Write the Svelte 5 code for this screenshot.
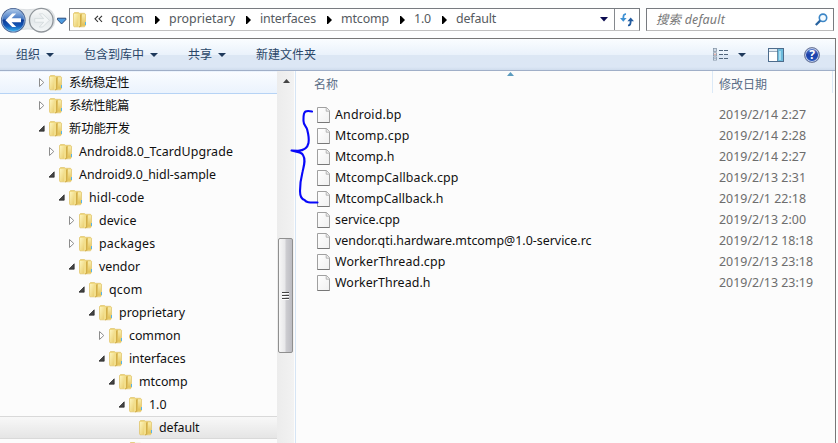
<script>
  const crumbs = [
    ['qcom', 33], ['proprietary', 66], ['interfaces', 56],
    ['mtcomp', 48], ['1.0', 17], ['default', 40]
  ];

  const tree = [
    { name: '系统稳定性', w: 60, level: 0, state: 'closed', mark: 'hover' },
    { name: '系统性能篇', w: 60, level: 0, state: 'closed' },
    { name: '新功能开发', w: 61, level: 0, state: 'open' },
    { name: 'Android8.0_TcardUpgrade', w: 154, level: 1, state: 'closed' },
    { name: 'Android9.0_hidl-sample', w: 137, level: 1, state: 'open' },
    { name: 'hidl-code', w: 55.5, level: 2, state: 'open' },
    { name: 'device', w: 37.5, level: 3, state: 'closed' },
    { name: 'packages', w: 56.5, level: 3, state: 'closed' },
    { name: 'vendor', w: 41, level: 3, state: 'open' },
    { name: 'qcom', w: 33.5, level: 4, state: 'open' },
    { name: 'proprietary', w: 66, level: 5, state: 'open' },
    { name: 'common', w: 51.5, level: 6, state: 'closed' },
    { name: 'interfaces', w: 56.5, level: 6, state: 'open' },
    { name: 'mtcomp', w: 48.5, level: 7, state: 'open' },
    { name: '1.0', w: 17.5, level: 8, state: 'open' },
    { name: 'default', w: 40.5, level: 9, state: 'none', mark: 'selected' },
    { name: '', w: 0, level: 8, state: 'none', mark: 'cut' }
  ];

  const files = [
    ['Android.bp', 66.5, '2019/2/14 2:27', 87],
    ['Mtcomp.cpp', 74.5, '2019/2/14 2:28', 87],
    ['Mtcomp.h', 59.5, '2019/2/14 2:27', 87],
    ['MtcompCallback.cpp', 123.5, '2019/2/13 2:31', 87],
    ['MtcompCallback.h', 108.5, '2019/2/1 22:18', 87],
    ['service.cpp', 65, '2019/2/13 2:00', 87],
    ['vendor.qti.hardware.mtcomp@1.0-service.rc', 256.5, '2019/2/12 18:18', 94],
    ['WorkerThread.cpp', 110.5, '2019/2/13 23:18', 94],
    ['WorkerThread.h', 95.5, '2019/2/13 23:19', 94]
  ];

  // Tracks a label so that it fills the given width.
  function fit(node, width) {
    if (!width) return;
    const natural = node.getBoundingClientRect().width;
    node.style.letterSpacing = `${(width - natural) / node.textContent.length}px`;
  }
</script>

{#snippet folder()}
  <svg class="folder" width="14" height="16" viewBox="0 0 14 16">
    <path d="M.5 1.5 1.5.5h4l1 .8h5l1 1v11l-1 1.5H1l-.5-1z" fill="#f0d980" stroke="#dfc36a" stroke-width=".7" />
    <path d="M1 2h5v12l-4 .5-1-.5z" fill="url(#folderFront)" />
    <path d="M6 3.2 8.6 1.8v12.4L6 15.5z" fill="#d2ae48" />
    <path d="M5 3 7 1.8v12L5 15.3z" fill="#f3df8c" />
    <path d="M9 2.5h3v11.2H9z" fill="url(#folderBack)" />
    <path d="M12 10h1v3h-1z" fill="#56b4ea" />
  </svg>
{/snippet}

<svg class="defs" width="0" height="0">
  <defs>
    <linearGradient id="folderFront" x2="1" y2="1"><stop stop-color="#fdf5bd" /><stop offset="1" stop-color="#e8ca66" /></linearGradient>
    <linearGradient id="folderBack" x2="0" y2="1"><stop stop-color="#f9ecaa" /><stop offset="1" stop-color="#e2c055" /></linearGradient>
    <linearGradient id="pageFill" x2="1" y2="1"><stop stop-color="#fff" /><stop offset="1" stop-color="#f0f0f0" /></linearGradient>
    <linearGradient id="ball" x2="0" y2="1"><stop stop-color="#a9c6e8" /><stop offset=".42" stop-color="#4a7cc6" /><stop offset=".5" stop-color="#0c3b96" /><stop offset=".75" stop-color="#1458b8" /><stop offset="1" stop-color="#35b4f0" /></linearGradient>
    <linearGradient id="ballOff" x2="0" y2="1"><stop stop-color="#fafbfb" /><stop offset=".5" stop-color="#e3e8ea" /><stop offset="1" stop-color="#f4f7f8" /></linearGradient>
  </defs>
</svg>

<div class="window">
  <header class="nav">
    <svg class="travel" width="69" height="36" viewBox="0 0 69 36">
      <path d="M10 8.5Q27 11 44 8.5Q54 8 55 20Q54 32 42 31Q28 27 14 31Z" fill="#e3e7e9" stroke="#c9ced1" stroke-width=".6" />
      <circle cx="13.3" cy="20.3" r="12.3" fill="#3f5a8c" />
      <circle cx="13.3" cy="20.3" r="11.2" fill="url(#ball)" stroke="#9dbbe0" stroke-width=".7" />
      <path d="M5.5 20.3 12.2 13.6h4l-4.6 4.7H21v4h-9.4l4.6 4.7h-4z" fill="#fff" />
      <circle cx="41.3" cy="20.2" r="11.8" fill="url(#ballOff)" stroke="#8f959a" stroke-width="1.3" />
      <path d="M49.3 20.3 42.6 13.8h-3.3l4.4 4.8h-9v3.6h9l-4.4 4.8h3.3z" fill="#f3f6f7" stroke="#cfd5d8" stroke-width=".7" />
      <path d="M57.5 18.2h8.3v1.5l-4.2 4.3-4.1-4.3z" fill="#4d9be0" stroke="#1c3e70" stroke-width=".9" />
    </svg>
    <div class="address">
      {@render folder()}
      <svg class="more" width="9" height="8" viewBox="0 0 9 8"><path d="M4 .8 1 3.8 4 6.8M8 .8 5 3.8 8 6.8" fill="none" stroke="#333" stroke-width="1.1" /></svg>
      <div class="crumbs">
        {#each crumbs as [name, w], i}
          {#if i}<svg class="step" width="5" height="8" viewBox="0 0 5 8"><path d="M0 0h1l4 4-4 4H0z" fill="#000" /></svg>{/if}
          <span use:fit={w}>{name}</span>
        {/each}
      </div>
      <svg class="drop" width="8" height="5" viewBox="0 0 8 5"><path d="M0 0h8L4 4.5z" fill="#0b0b50" /></svg>
      <div class="refresh">
        <svg width="14" height="14" viewBox="0 0 14 14">
          <path d="M6 1.2C3.7 1 3.3 2.5 3.3 6" fill="none" stroke="#3e91d4" stroke-width="1.8" /><path d="M0 5h6.6L3.3 8.7z" fill="#3e91d4" />
          <path d="M8 12.3c2.2.2 2.7-1.3 2.7-5" fill="none" stroke="#235ca0" stroke-width="1.8" /><path d="M7.4 8.2H14l-3.3-3.7z" fill="#235ca0" />
        </svg>
      </div>
    </div>
    <div class="search">
      <span use:fit={69}>搜索 default</span>
      <svg width="13" height="13" viewBox="0 0 13 13"><circle cx="8" cy="4.8" r="3.7" fill="#f5fbff" stroke="#3c86c6" stroke-width="1.6" /><path d="M5.2 7.6.8 12" stroke="#27639f" stroke-width="2.2" /></svg>
    </div>
  </header>

  <div class="body">
    <div class="toolbar">
      <div class="tool t1">组织<i></i></div>
      <div class="tool t2">包含到库中<i></i></div>
      <div class="tool t3">共享<i></i></div>
      <div class="tool t4">新建文件夹</div>
      <div class="right">
        <svg width="15" height="13" viewBox="0 0 15 13">
          <g fill="#fff" stroke="#8494a6" stroke-width=".8"><rect x=".5" y=".5" width="3" height="3" /><rect x=".5" y="4.8" width="3" height="3" /><rect x=".5" y="9.1" width="3" height="3" /></g>
          <path d="M1.5 2h1M1.5 10.6h1" stroke="#3f70a8" /><path d="M1.5 6.3h1" stroke="#c04030" />
          <path d="M6 2.5h4m1 0h4M6 6.5h4m1 0h4M6 10.5h4m1 0h4" stroke="#52667c" />
        </svg>
        <i></i>
        <svg class="preview" width="16" height="14" viewBox="0 0 16 14"><rect x=".5" y=".5" width="15" height="13" fill="#fff" stroke="#4d6c8c" /><path d="M1 1h14v2H1z" fill="#e4edf5" /><path d="M1 3.5h9" stroke="#7c95ad" stroke-width=".8" /><rect x="10" y="1" width="5" height="12" fill="#6dbbdc" /><path d="M9.5 1v12" stroke="#44718f" stroke-width=".8" /><path d="M11 3h2v9h-2z" fill="#a8dcef" /></svg>
        <div class="help">?</div>
      </div>
    </div>

    <main>
      <nav>
        {#each tree as row}
          <div class="node {row.mark ?? ''}" style="padding-left: {39 + row.level * 10}px">
            <svg class="twist" width="7" height="9" viewBox="0 0 7 9">
              {#if row.state === 'closed'}<path d="M.5.5 4.8 4.5.5 8.5z" fill="#fff" stroke="#8c8c8c" />{/if}
              {#if row.state === 'open'}<path d="M5.2 1.8v5.4H-.2z" fill="#444" stroke="#222" stroke-width=".7" />{/if}
            </svg>
            {@render folder()}
            <span use:fit={row.w}>{row.name}</span>
          </div>
        {/each}
      </nav>
      <div class="scroll">
        <svg class="up" width="7" height="4" viewBox="0 0 7 4"><path d="M3.5 0 7 4H0z" fill="#444" /></svg>
        <div class="thumb"><b></b><b></b><b></b></div>
      </div>
      <section>
        <div class="head">
          <span class="hname">名称</span>
          <svg class="sort" width="7" height="4" viewBox="0 0 7 4"><path d="M3.5 0 7 4H0z" fill="#5c9cbf" /></svg>
          <span class="hdate">修改日期</span>
        </div>
        {#each files as [name, w, date, dw]}
          <div class="file">
            <svg width="14" height="16" viewBox="0 0 14 16"><path d="M.5.5h9l3 3.3v11.7H.5z" fill="url(#pageFill)" stroke="#a0a0a0" /><path d="M.5 15.5h12" stroke="#777" /><path d="M9.2.8v3.4h3.3" fill="#eee" stroke="#b0b0b0" stroke-width=".9" /></svg>
            <div class="fname"><span use:fit={w}>{name}</span></div>
            <div class="date"><span use:fit={dw}>{date}</span></div>
          </div>
        {/each}
        <svg class="brace" width="34" height="100" viewBox="290 106 34 100">
          <path d="M312 111.5Q307.5 110.5 305.5 111.5C303 113 303.5 118 303.5 121C303.5 125 306 126 307 129C308 133 309.5 138 308.5 143C307.5 148 304 150.5 298 150.8L291.5 150.5C299 152 302 152.5 303 155C306 160 304 165 302.5 172C300.5 180 300 184 300 191C300 196 301 199 304.5 200C307 203 310 202.5 317.5 202.5" />
        </svg>
      </section>
    </main>
  </div>
</div>

<style>
  :global(body) { margin: 0; background: #fdfefe; overflow: hidden; }
  .window { width: 838px; height: 443px; overflow: hidden; font: 12.4px/16px "Noto Sans", "Noto Sans CJK SC", sans-serif; color: #101010; white-space: nowrap; }
  .defs { position: absolute; }
  svg { flex: none; display: block; }
  .nav { display: flex; height: 38px; }
  .address { box-sizing: border-box; display: flex; align-items: center; width: 571px; height: 23px; margin-top: 8px; border: 1px solid #777b80; border-bottom-color: #c0c0c0; background: #fff; padding-left: 3px; color: #555a60; }
  .more { margin: 0 0 2px 7px; }
  .crumbs { display: flex; align-items: center; margin-left: 8px; flex: 1; padding-bottom: 1px; }
  .step { margin: 1px 9px 0 11px; }
  .drop { margin-right: 6px; }
  .refresh { display: flex; align-items: center; justify-content: center; width: 24px; height: 21px; border-left: 1px solid #85898e; }
  .search { box-sizing: border-box; display: flex; align-items: center; justify-content: space-between; width: 188px; height: 23px; margin: 8px 0 0 6px; padding: 0 5px 0 9px; border: 1px solid #777b80; border-bottom-color: #bbb; background: #fff; color: #777; font-style: italic; }
  .body { box-sizing: border-box; width: 836px; height: 405px; border-top: 1px solid #777; border-right: 1px solid #777; overflow: hidden; }
  .toolbar { box-sizing: border-box; display: flex; align-items: center; height: 32px; border-bottom: 1px solid #a0afc8; background: linear-gradient(#fafdff 0, #eaf2fb 50%, #dce7f4 51%, #dce7f5 90%, #cfdced); color: #2a4668; font-size: 12px; padding-left: 16px; }
  .tool { display: flex; align-items: center; }
  .t1 { width: 68px; }
  .t2 { width: 104px; }
  .t3 { width: 68px; }
  i { width: 0; height: 0; border: 4px solid transparent; border-top: 4.5px solid #1e395b; border-bottom: 0; margin-left: 6px; }
  .right { display: flex; align-items: center; margin-left: auto; padding-right: 15px; }
  .right i { margin-left: 10px; }
  .preview { margin: 0 20px 0 22px; }
  .help { box-sizing: border-box; width: 16px; height: 16px; border: 1px solid #727c9a; border-radius: 50%; background: linear-gradient(#5d7fd0, #1b3fa8 50%, #2459c4); box-shadow: inset 0 0 0 1px #c4d0e8; color: #fff; font-weight: bold; font-size: 12px; line-height: 14px; text-align: center; }
  main { display: flex; height: 372px; background: #fcfcfc; }
  nav { width: 277px; overflow: hidden; }
  .node { box-sizing: border-box; display: flex; align-items: center; height: 23px; border: solid transparent; border-width: 1px 0; }
  .node.hover { border-bottom-color: #b6d3f5; background: linear-gradient(#fafcff, #ebf3fd); }
  .node.selected { border-color: #d9d9d9; background: linear-gradient(#f8f8f8, #e5e5e5); }
  .node.cut { align-items: flex-start; padding-top: 2px; }
  .twist { margin-right: 3px; }
  .node .folder { margin-right: 6px; }
  .scroll { display: flex; flex-direction: column; align-items: center; width: 17px; background: linear-gradient(90deg, #ececec, #f2f2f2); }
  .up { margin: 8px 0 0 1px; }
  .thumb { box-sizing: border-box; display: flex; flex-direction: column; align-items: center; justify-content: center; gap: 1px; width: 15px; height: 115px; margin-top: 155px; border: 1px solid #8f8f8f; border-radius: 2px; background: linear-gradient(90deg, #f7f7f7, #e8e8ea 45%, #cdcdd1 55%, #bcbcc2); }
  b { width: 7px; height: 1px; background: #444; border-bottom: 1px solid #fff; }
  section { position: relative; flex: 1; border-left: 1px solid #d6e5f5; margin-left: 1px; }
  .head { display: flex; align-items: flex-start; height: 33px; color: #5a6d86; font-size: 12px; }
  .hname { width: 193px; padding: 6px 0 0 18px; }
  .sort { margin-top: 1px; }
  .hdate { height: 16px; margin-left: 198px; padding: 6px 0 0 6px; border-left: 1px solid #dbe9f7; width: 113px; border-right: 1px solid #dbe9f7; }
  .file { display: flex; align-items: center; height: 21px; padding-left: 21px; }
  .file svg { margin-right: 4px; }
  .fname { width: 384px; }
  .date { color: #6d6d6d; }
  .brace { position: absolute; left: -6px; top: 35px; fill: none; stroke: #0808fa; stroke-width: 2.1; stroke-linecap: round; stroke-linejoin: round; }
</style>
